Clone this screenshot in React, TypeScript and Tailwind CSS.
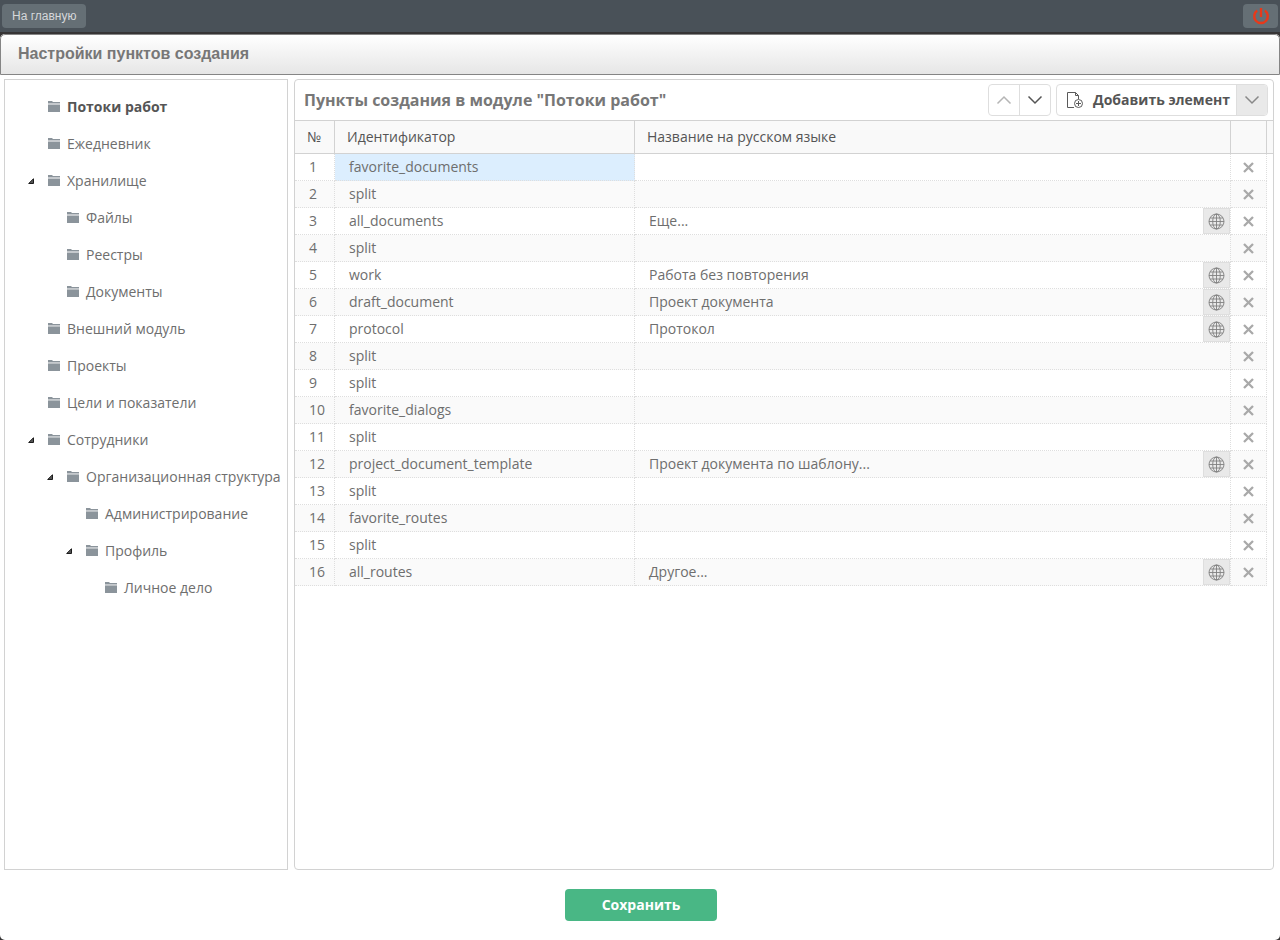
import clsx from "clsx";

type TreeNode = {
  name: string;
  children?: TreeNode[];
};

type Item = {
  id: string;
  title?: string;
};

const modules: TreeNode[] = [
  { name: "Потоки работ" },
  { name: "Ежедневник" },
  {
    name: "Хранилище",
    children: [{ name: "Файлы" }, { name: "Реестры" }, { name: "Документы" }],
  },
  { name: "Внешний модуль" },
  { name: "Проекты" },
  { name: "Цели и показатели" },
  {
    name: "Сотрудники",
    children: [
      {
        name: "Организационная структура",
        children: [
          { name: "Администрирование" },
          { name: "Профиль", children: [{ name: "Личное дело" }] },
        ],
      },
    ],
  },
];

const items: Item[] = [
  { id: "favorite_documents" },
  { id: "split" },
  { id: "all_documents", title: "Еще..." },
  { id: "split" },
  { id: "work", title: "Работа без повторения" },
  { id: "draft_document", title: "Проект документа" },
  { id: "protocol", title: "Протокол" },
  { id: "split" },
  { id: "split" },
  { id: "favorite_dialogs" },
  { id: "split" },
  { id: "project_document_template", title: "Проект документа по шаблону..." },
  { id: "split" },
  { id: "favorite_routes" },
  { id: "split" },
  { id: "all_routes", title: "Другое..." },
];

const PowerIcon = () => (
  <svg width="18" height="18" viewBox="0 0 18 18" fill="none" stroke="#e8391a" strokeWidth="2.4">
    <path d="M5.2 3.6A6.8 6.8 0 1 0 12.8 3.6" />
    <path d="M9 1v9" />
  </svg>
);

const FolderIcon = () => (
  <svg width="12" height="11" viewBox="0 0 12 11" fill="#8b949b" className="shrink-0">
    <path d="M0 0h4l1 1h7v1.4H0z" />
    <path d="M0 3.4h12V11H0z" />
  </svg>
);

const ExpandedIcon = () => (
  <svg width="6" height="6" viewBox="0 0 6 6" className="block">
    <path d="M5.5.7v4.8H.7z" fill="#555" stroke="#1c1c1c" />
  </svg>
);

const Chevron = ({ up = false }: { up?: boolean }) => (
  <svg width="16" height="10" viewBox="0 0 16 10" fill="none" stroke="currentColor" strokeWidth="1.5">
    <path d={up ? "M1.5 8.5 8 2l6.5 6.5" : "M1.5 1.5 8 8l6.5-6.5"} />
  </svg>
);

const AddFileIcon = () => (
  <svg width="17" height="17" viewBox="0 0 17 17" fill="none" stroke="#5a5a5a">
    <path d="M7 15.500H.5V.5h8l3 3v3.500M8.500.5v3h3" />
    <circle cx="11.500" cy="11.500" r="4" />
    <path d="M11.500 9v5M9 11.500h5" />
  </svg>
);

const GlobeIcon = () => (
  <svg width="17" height="17" viewBox="0 0 17 17" fill="none" stroke="#808080" strokeWidth="0.9">
    <circle cx="8.500" cy="8.500" r="7.500" />
    <ellipse cx="8.500" cy="8.500" rx="3.800" ry="7.500" />
    <path d="M8.500 1v15M1 8.500h15M2 5h13M2 12h13" />
  </svg>
);

const CloseIcon = () => (
  <svg width="11" height="11" viewBox="0 0 11 11" stroke="#a9a9a9" strokeWidth="2.300" className="block">
    <path d="M1 1l9 9M10 1l-9 9" />
  </svg>
);

const Tree = ({ nodes, nested = false }: { nodes: TreeNode[]; nested?: boolean }) => (
  <ul className={clsx(nested && "pl-[19px]")}>
    {nodes.map((node) => (
      <li key={node.name}>
        <div className="flex h-[37px] items-center">
          <div className="w-5 shrink-0">
            {node.children && (
              <button aria-label="Свернуть" className="block">
                <ExpandedIcon />
              </button>
            )}
          </div>
          <a
            href="#"
            className={clsx(
              "flex items-center gap-[7px] whitespace-nowrap",
              node.name === "Потоки работ" ? "font-bold text-[#555]" : "text-[#6e6e6e]"
            )}
          >
            <FolderIcon />
            {node.name}
          </a>
        </div>
        {node.children && <Tree nodes={node.children} nested />}
      </li>
    ))}
  </ul>
);

const ItemsTable = () => (
  <table className="w-full table-fixed border-separate border-spacing-0 text-left">
    <colgroup>
      <col className="w-10" />
      <col className="w-[300px]" />
      <col />
      <col className="w-9" />
      <col className="w-[6px]" />
    </colgroup>
    <thead>
      <tr className="h-[34px] bg-[#f9f9f9] text-[#555] *:border-y *:border-[#d2d2d2] *:p-0 *:font-normal">
        <th className="border-r text-center">№</th>
        <th className="border-r">
          <span className="pl-3">Идентификатор</span>
        </th>
        <th className="border-r">
          <span className="pl-3">Название на русском языке</span>
        </th>
        <th className="border-r"></th>
        <th></th>
      </tr>
    </thead>
    <tbody className="text-[#6e6e6e]">
      {items.map((item, i) => {
        const cell = clsx(
          "border-r border-b border-dotted border-[#dedede] p-0",
          i % 2 === 1 && "bg-[#fafafa]"
        );
        return (
          <tr key={i} className="h-[27px]">
            <td className={cell}>
              <span className="pl-[14px]">{i + 1}</span>
            </td>
            <td className={clsx(cell, i === 0 && "bg-[#dceefe]")}>
              <span className="pl-[14px]">{item.id}</span>
            </td>
            <td className={cell}>
              <div className="flex h-[26px] items-center justify-between pl-[14px]">
                <span>{item.title}</span>
                {item.title && (
                  <button
                    aria-label="Перевод"
                    className="flex h-[26px] w-[27px] items-center justify-center border border-[#dedede] bg-[#e9e9e9]"
                  >
                    <GlobeIcon />
                  </button>
                )}
              </div>
            </td>
            <td className={cell}>
              <button aria-label="Удалить" className="mx-auto block">
                <CloseIcon />
              </button>
            </td>
            <td className="p-0"></td>
          </tr>
        );
      })}
    </tbody>
  </table>
);

export default function App() {
  return (
    <div className="flex min-h-screen flex-col bg-[#363435] font-['Open_Sans','Noto_Sans',sans-serif] text-sm">
      <header className="flex h-8 items-center justify-between bg-[#495158] px-[2px]">
        <button className="h-6 rounded bg-[#656f75] px-[10px] font-['Liberation_Sans',sans-serif] text-xs text-[#d5d8da]">
          На главную
        </button>
        <button
          aria-label="Выход"
          className="flex h-6 w-[35px] items-center justify-center rounded bg-[#656f75]"
        >
          <PowerIcon />
        </button>
      </header>

      <div className="mt-[2px] flex flex-1 flex-col overflow-hidden rounded-[5px] bg-white">
        <div className="flex h-[41px] items-center rounded-t-[5px] border border-[#858585] bg-linear-to-b from-white to-[#e6e6e6] px-[17px] pb-[2px]">
          <h1 className="font-['Liberation_Sans',sans-serif] text-base font-bold text-[#777]">
            Настройки пунктов создания
          </h1>
        </div>

        <main className="flex flex-1 gap-[6px] pt-1 pr-[6px] pl-1">
          <nav className="w-[284px] shrink-0 border border-[#d2d2d2] py-2 pl-[23px]">
            <Tree nodes={modules} />
          </nav>

          <section className="min-w-0 flex-1 rounded border border-[#d2d2d2]">
            <div className="flex h-10 items-center justify-between pr-[5px] pl-[9px]">
              <h2 className="text-base font-bold text-[#777]">
                Пункты создания в модуле "Потоки работ"
              </h2>
              <div className="flex gap-[5px]">
                <div className="flex h-8 divide-x divide-[#dedede] rounded border border-[#dedede]">
                  <button aria-label="Вверх" className="flex w-[31px] items-center justify-center text-[#b5b5b5]">
                    <Chevron up />
                  </button>
                  <button aria-label="Вниз" className="flex w-[30px] items-center justify-center text-[#555]">
                    <Chevron />
                  </button>
                </div>
                <div className="flex h-8 overflow-hidden rounded border border-[#dedede]">
                  <button className="flex w-[179px] items-center gap-[9px] pl-[10px] font-bold whitespace-nowrap text-[#555]">
                    <AddFileIcon />
                    Добавить элемент
                  </button>
                  <button
                    aria-label="Выбрать тип"
                    className="flex w-[31px] items-center justify-center border-l border-[#dedede] bg-[#e9e9e9] text-[#888]"
                  >
                    <Chevron />
                  </button>
                </div>
              </div>
            </div>
            <ItemsTable />
          </section>
        </main>

        <footer className="flex justify-center py-[19px] pl-[2px]">
          <button className="h-8 w-[152px] rounded bg-[#49b785] font-bold text-white">
            Сохранить
          </button>
        </footer>
      </div>
    </div>
  );
}
